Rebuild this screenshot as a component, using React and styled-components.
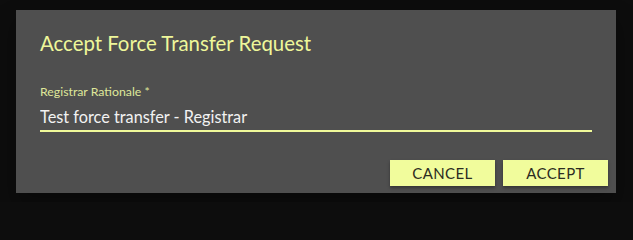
import React, { useState } from 'react';
import styled, { createGlobalStyle } from 'styled-components';

const GlobalStyle = createGlobalStyle`
  html, body {
    margin: 0;
    padding: 0;
    background: #0d0d0d;
    font-family: Lato, "Liberation Sans", sans-serif;
  }
`;

const Backdrop = styled.div`
  width: 633px;
  height: 202px;
  padding: 10px 17px 9px 16px;
  box-sizing: border-box;
`;

const Dialog = styled.div`
  background: #4f4f4f;
  height: 100%;
  padding: 22px 8px 7px 24px;
  box-sizing: border-box;
  display: flex;
  flex-direction: column;
  box-shadow: 0 11px 15px -7px rgba(0, 0, 0, 0.2), 0 24px 38px 3px rgba(0, 0, 0, 0.14);
`;

const Title = styled.h2`
  margin: 0;
  font-size: 20.4px;
  font-weight: 400;
  line-height: 22px;
  color: #eef79a;
`;

const Field = styled.div`
  margin-top: 31px;
  margin-right: 16px;
  display: flex;
  flex-direction: column;
`;

const Label = styled.label`
  font-size: 12.3px;
  line-height: 14px;
  color: #dfe79a;
`;

const Input = styled.input`
  margin-top: 5px;
  background: transparent;
  border: none;
  border-bottom: 2px solid #f0fa9a;
  padding: 3px 0 4px;
  font-family: inherit;
  font-size: 16.3px;
  line-height: 19px;
  color: #f2f2f2;
  outline: none;
`;

const Actions = styled.div`
  margin-top: auto;
  display: flex;
  justify-content: flex-end;
  gap: 8px;
`;

const Button = styled.button`
  width: 105px;
  height: 26px;
  padding: 0;
  border: none;
  border-radius: 0;
  background: #f1fc9c;
  color: #2c2c22;
  font-family: inherit;
  font-size: 15px;
  letter-spacing: 0.4px;
  text-transform: uppercase;
  box-shadow: 0 2px 3px rgba(0, 0, 0, 0.35);
  cursor: pointer;
`;

export default function App() {
  const [value, setValue] = useState('Test force transfer - Registrar');
  return (
    <>
      <GlobalStyle />
      <Backdrop>
        <Dialog>
          <Title>Accept Force Transfer Request</Title>
          <Field>
            <Label>Registrar Rationale *</Label>
            <Input value={value} onChange={(e) => setValue(e.target.value)} />
          </Field>
          <Actions>
            <Button>Cancel</Button>
            <Button>Accept</Button>
          </Actions>
        </Dialog>
      </Backdrop>
    </>
  );
}
